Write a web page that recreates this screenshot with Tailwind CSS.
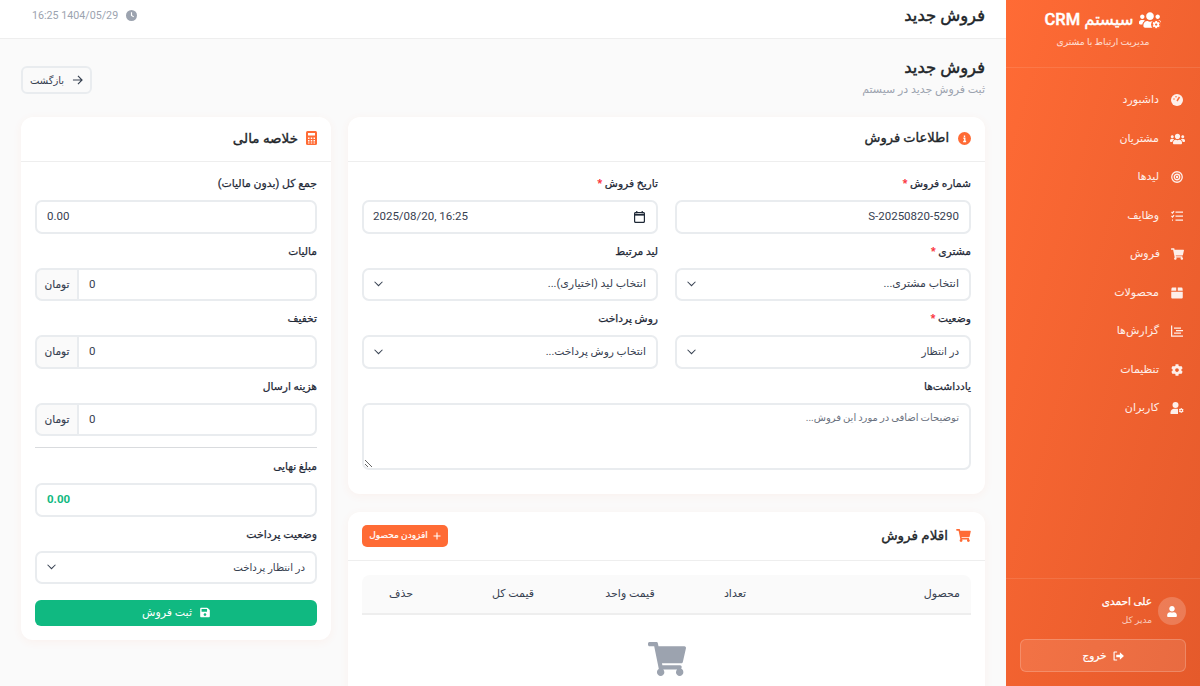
<!DOCTYPE html>
<html lang="fa" dir="rtl">
<head>
  <meta charset="UTF-8" />
  <title>فروش جدید</title>
  <script src="https://cdn.jsdelivr.net/npm/@tailwindcss/browser@4"></script>
</head>
<body class="h-[686px] overflow-hidden bg-[#fafafa] font-['Roboto','DejaVu_Sans',sans-serif] text-[#1f2937]">
<div class="flex h-[686px]">

  <!-- Sidebar -->
  <aside class="w-[194px] shrink-0 h-full flex flex-col text-white bg-gradient-to-br from-[#ff6b35] to-[#e55a2b]">
    <div class="h-[68px] border-b border-white/10 flex flex-col items-center pt-[9px]">
      <div class="flex items-center gap-[6px] h-[22px]">
        <svg class="w-[22px] h-[18px]" viewBox="0 0 640 512" fill="currentColor"><path d="M96 224c35.3 0 64-28.7 64-64s-28.7-64-64-64-64 28.7-64 64 28.7 64 64 64zm448 0c35.3 0 64-28.7 64-64s-28.7-64-64-64-64 28.7-64 64 28.7 64 64 64zm32 32h-64c-17.6 0-33.5 7.1-45.1 18.6 40.3 22.1 68.9 62 75.1 109.4h66c17.7 0 32-14.3 32-32v-32c0-35.3-28.7-64-64-64zm-256 0c61.9 0 112-50.1 112-112S381.9 32 320 32 208 82.1 208 144s50.1 112 112 112zm76.8 32h-8.3c-20.8 10-43.9 16-68.5 16s-47.6-6-68.5-16h-8.3C179.6 288 128 339.6 128 403.2V432c0 26.5 21.5 48 48 48h288c26.5 0 48-21.5 48-48v-28.8c0-63.6-51.6-115.2-115.2-115.2zm-223.7-13.4C161.5 263.1 145.6 256 128 256H64c-35.3 0-64 28.7-64 64v32c0 17.7 14.3 32 32 32h65.9c6.3-47.4 34.9-87.3 75.2-109.4z"/><circle cx="500" cy="390" r="150" fill="#ff6b35"/><svg x="390" y="280" width="220" height="220" viewBox="0 0 512 512"><path d="M487.4 315.7l-42.6-24.6c4.3-23.2 4.3-47 0-70.2l42.6-24.6c4.9-2.8 7.1-8.6 5.5-14-11.1-35.6-30-67.8-54.7-94.6-3.8-4.1-10-5.1-14.8-2.3L380.8 110c-17.9-15.4-38.5-27.3-60.8-35.1V25.8c0-5.6-3.9-10.5-9.4-11.7-36.7-8.2-74.3-7.8-109.2 0-5.5 1.2-9.4 6.1-9.4 11.7V75c-22.2 7.9-42.8 19.8-60.8 35.1L88.7 85.5c-4.9-2.8-11-1.9-14.8 2.3-24.7 26.7-43.6 58.9-54.7 94.6-1.7 5.4.6 11.2 5.5 14L67.3 221c-4.3 23.2-4.3 47 0 70.2l-42.6 24.6c-4.9 2.8-7.1 8.6-5.5 14 11.1 35.6 30 67.8 54.7 94.6 3.8 4.1 10 5.1 14.8 2.3l42.6-24.6c17.9 15.4 38.5 27.3 60.8 35.1v49.2c0 5.6 3.9 10.5 9.4 11.7 36.7 8.2 74.3 7.8 109.2 0 5.5-1.2 9.4-6.1 9.4-11.7v-49.2c22.2-7.9 42.8-19.8 60.8-35.1l42.6 24.6c4.9 2.8 11 1.9 14.8-2.3 24.7-26.7 43.6-58.9 54.7-94.6 1.5-5.5-.7-11.3-5.6-14.1zM256 336c-44.1 0-80-35.9-80-80s35.9-80 80-80 80 35.9 80 80-35.9 80-80 80z"/></svg></svg>
        <span class="text-[16.4px] [-webkit-text-stroke:0.4px_currentColor]">سیستم <b class="text-[16.5px] font-medium">CRM</b></span>
      </div>
      <p class="mt-[4px] text-[9.2px] text-white/80">مدیریت ارتباط با مشتری</p>
    </div>

    <nav class="pt-[13px] flex flex-col text-[11px] text-white/90">
      <a class="h-[38.5px] flex items-center gap-[12px] pr-[17px]">
        <svg class="w-[12px] h-[12px] shrink-0" viewBox="0 0 24 24"><circle cx="12" cy="12" r="12" fill="currentColor"/><path d="M12 14 17 6" stroke="#ff6b35" stroke-width="3"/><circle cx="6" cy="10" r="1.5" fill="#ff6b35"/><circle cx="10" cy="5.500" r="1.5" fill="#ff6b35"/></svg>
        <span>داشبورد</span>
      </a>
      <a class="h-[38.5px] flex items-center gap-[11px] pr-[15px]">
        <svg class="w-[15px] h-[12px] shrink-0" viewBox="0 0 640 512" fill="currentColor"><path d="M96 224c35.3 0 64-28.7 64-64s-28.7-64-64-64-64 28.7-64 64 28.7 64 64 64zm448 0c35.3 0 64-28.7 64-64s-28.7-64-64-64-64 28.7-64 64 28.7 64 64 64zm32 32h-64c-17.6 0-33.5 7.1-45.1 18.6 40.3 22.1 68.9 62 75.1 109.4h66c17.7 0 32-14.3 32-32v-32c0-35.3-28.7-64-64-64zm-256 0c61.9 0 112-50.1 112-112S381.9 32 320 32 208 82.1 208 144s50.1 112 112 112zm76.8 32h-8.3c-20.8 10-43.9 16-68.5 16s-47.6-6-68.5-16h-8.3C179.6 288 128 339.6 128 403.2V432c0 26.5 21.5 48 48 48h288c26.5 0 48-21.5 48-48v-28.8c0-63.6-51.6-115.2-115.2-115.2zm-223.7-13.4C161.5 263.1 145.6 256 128 256H64c-35.3 0-64 28.700-64 64v32c0 17.7 14.3 32 32 32h65.900c6.3-47.4 34.9-87.3 75.2-109.4z"/></svg>
        <span>مشتریان</span>
      </a>
      <a class="h-[38.5px] flex items-center gap-[12px] pr-[17px]">
        <svg class="w-[12px] h-[12px] shrink-0" viewBox="0 0 24 24" fill="none" stroke="currentColor" stroke-width="2.600"><circle cx="12" cy="12" r="10.500"/><circle cx="12" cy="12" r="5.500"/><circle cx="12" cy="12" r="1.200"/></svg>
        <span>لیدها</span>
      </a>
      <a class="h-[38.5px] flex items-center gap-[12px] pr-[17px]">
        <svg class="w-[12px] h-[12px] shrink-0" viewBox="0 0 24 24" fill="none" stroke="currentColor" stroke-width="2.500"><path d="M9 4h15M9 12h15M9 20h15M1 4l2 2 3-4M1 12l2 2 3-4M2 20h2"/></svg>
        <span>وظایف</span>
      </a>
      <a class="h-[38.5px] flex items-center gap-[11px] pr-[16px]">
        <svg class="w-[13px] h-[12px] shrink-0" viewBox="0 0 576 512" fill="currentColor"><path d="M528.12 301.319l47.273-208C578.806 78.301 567.391 64 551.99 64H159.208l-9.166-44.81C147.758 8.021 137.93 0 126.529 0H24C10.745 0 0 10.745 0 24v16c0 13.255 10.745 24 24 24h69.883l70.248 343.435C147.325 417.1 136 435.222 136 456c0 30.928 25.072 56 56 56s56-25.072 56-56c0-15.674-6.447-29.835-16.824-40h209.647C430.447 426.165 424 440.326 424 456c0 30.928 25.072 56 56 56s56-25.072 56-56c0-22.172-12.888-41.332-31.579-50.405l5.517-24.276c3.413-15.018-8.002-29.319-23.403-29.319H218.117l-6.545-32h293.145c11.206 0 20.92-7.754 23.403-18.681z"/></svg>
        <span>فروش</span>
      </a>
      <a class="h-[38.5px] flex items-center gap-[12px] pr-[17px]">
        <svg class="w-[12px] h-[12px] shrink-0" viewBox="0 0 24 24" fill="currentColor"><path d="M3 1h7.500v6.500H0.500L1 3a2 2 0 0 1 2-2zM13.500 1H21a2 2 0 0 1 2 2l.500 4.500h-10zM0.500 9.500h23V21a2 2 0 0 1-2 2h-19a2 2 0 0 1-2-2z"/></svg>
        <span>محصولات</span>
      </a>
      <a class="h-[38.5px] flex items-center gap-[12px] pr-[17px]">
        <svg class="w-[12px] h-[12px] shrink-0" viewBox="0 0 24 24" fill="currentColor"><path d="M0 1h2.500v20H24v2.500H0zM6 5h14v2.500H6zM10 10h14v2.500H10zM6 15h14v2.500H6z"/></svg>
        <span>گزارش‌ها</span>
      </a>
      <a class="h-[38.5px] flex items-center gap-[12px] pr-[17px]">
        <svg class="w-[12px] h-[12px] shrink-0" viewBox="0 0 512 512" fill="currentColor"><path d="M487.4 315.7l-42.6-24.6c4.3-23.2 4.3-47 0-70.2l42.6-24.6c4.9-2.8 7.1-8.6 5.5-14-11.1-35.6-30-67.8-54.7-94.6-3.8-4.1-10-5.1-14.8-2.3L380.8 110c-17.9-15.4-38.5-27.3-60.8-35.1V25.8c0-5.6-3.9-10.5-9.4-11.7-36.7-8.2-74.3-7.8-109.2 0-5.5 1.2-9.4 6.1-9.4 11.7V75c-22.2 7.9-42.8 19.8-60.8 35.1L88.7 85.5c-4.9-2.8-11-1.9-14.8 2.3-24.7 26.7-43.6 58.9-54.7 94.6-1.7 5.4.6 11.2 5.5 14L67.3 221c-4.3 23.2-4.3 47 0 70.2l-42.6 24.6c-4.9 2.8-7.1 8.6-5.5 14 11.1 35.6 30 67.8 54.7 94.6 3.8 4.1 10 5.1 14.8 2.3l42.6-24.6c17.9 15.4 38.5 27.3 60.8 35.1v49.2c0 5.6 3.9 10.5 9.4 11.7 36.7 8.2 74.3 7.8 109.2 0 5.5-1.2 9.4-6.1 9.4-11.7v-49.2c22.2-7.9 42.8-19.8 60.8-35.1l42.6 24.6c4.9 2.8 11 1.9 14.8-2.3 24.7-26.7 43.6-58.9 54.7-94.6 1.5-5.5-.7-11.3-5.6-14.1zM256 336c-44.1 0-80-35.9-80-80s35.9-80 80-80 80 35.9 80 80-35.9 80-80 80z"/></svg>
        <span>تنظیمات</span>
      </a>
      <a class="h-[38.5px] flex items-center gap-[11px] pr-[16px]">
        <svg class="w-[14px] h-[12px] shrink-0" viewBox="0 0 28 24" fill="currentColor"><circle cx="11" cy="6" r="6"/><path d="M1 24v-3c0-5 4-7.500 7-7.500h6c1.500 0 2 .5 2 2v8.500z"/><svg x="17.500" y="12" width="10" height="10" viewBox="0 0 512 512"><path d="M487.4 315.7l-42.6-24.6c4.3-23.2 4.3-47 0-70.2l42.6-24.6c4.9-2.8 7.1-8.6 5.5-14-11.1-35.6-30-67.8-54.7-94.6-3.8-4.1-10-5.1-14.8-2.3L380.8 110c-17.9-15.4-38.5-27.3-60.8-35.1V25.8c0-5.6-3.9-10.5-9.4-11.7-36.7-8.2-74.3-7.8-109.2 0-5.5 1.2-9.4 6.1-9.4 11.7V75c-22.2 7.9-42.8 19.8-60.8 35.1L88.7 85.5c-4.9-2.8-11-1.9-14.8 2.3-24.7 26.7-43.6 58.9-54.7 94.6-1.7 5.4.6 11.2 5.5 14L67.3 221c-4.3 23.2-4.3 47 0 70.2l-42.6 24.6c-4.9 2.8-7.1 8.6-5.5 14 11.1 35.6 30 67.8 54.7 94.6 3.8 4.1 10 5.1 14.8 2.3l42.6-24.6c17.9 15.4 38.5 27.3 60.8 35.1v49.2c0 5.6 3.9 10.5 9.4 11.7 36.7 8.2 74.3 7.8 109.2 0 5.5-1.2 9.4-6.1 9.4-11.7v-49.2c22.2-7.9 42.8-19.8 60.8-35.1l42.6 24.6c4.9 2.8 11 1.9 14.8-2.3 24.7-26.7 43.6-58.9 54.7-94.6 1.5-5.5-.7-11.3-5.6-14.1zM256 336c-44.1 0-80-35.9-80-80s35.9-80 80-80 80 35.9 80 80-35.9 80-80 80z"/></svg></svg>
        <span>کاربران</span>
      </a>
    </nav>

    <div class="mt-auto border-t border-white/10 px-[14px] pt-[18px] pb-[14px]">
      <div class="flex items-center gap-[6px] h-[28px]">
        <div class="w-[28px] h-[28px] rounded-full bg-white/20 flex items-center justify-center">
          <svg class="w-[10px] h-[11px]" viewBox="0 0 448 512" fill="currentColor"><path d="M224 256c70.7 0 128-57.3 128-128S294.7 0 224 0 96 57.3 96 128s57.3 128 128 128zm89.6 32h-16.7c-22.2 10.2-46.9 16-72.9 16s-50.6-5.8-72.9-16h-16.7C60.200 288 0 348.2 0 422.4V464c0 26.5 21.5 48 48 48h352c26.5 0 48-21.500 48-48v-41.6c0-74.2-60.2-134.4-134.4-134.4z"/></svg>
        </div>
        <div class="flex flex-col">
          <span class="text-[10.500px] [-webkit-text-stroke:0.25px_currentColor] leading-[18px]">علی احمدی</span>
          <span class="text-[9px] text-white/70 leading-[18px]">مدیر کل</span>
        </div>
      </div>
      <button class="mt-[14px] w-full h-[33px] rounded-[6px] bg-white/10 border border-white/20 flex items-center justify-center gap-[6px] text-[10.500px] [-webkit-text-stroke:0.25px_currentColor] text-white">
        <svg class="w-[11px] h-[10px]" viewBox="0 0 24 22" fill="currentColor"><path d="M9 1H3a2 2 0 0 0-2 2v16a2 2 0 0 0 2 2h6v-2.500H3.500v-15H9z"/><path d="M7 8h8V3l9 8-9 8v-5H7z"/></svg>
        <span>خروج</span>
      </button>
    </div>
  </aside>

  <!-- Main -->
  <main class="flex-1 min-w-0 flex flex-col">
    <header class="h-[39px] shrink-0 bg-white border-b border-[#eeeeee] flex items-center justify-between pr-[21px] pl-[32px]">
      <h1 class="text-[16.4px] text-[#212529] [-webkit-text-stroke:0.45px_currentColor] leading-none pb-[6px]">فروش جدید</h1>
      <div class="flex items-center gap-[8px] text-[10.7px] text-[#9ca3af] pb-[6px]">
        <svg class="w-[11px] h-[11px]" viewBox="0 0 24 24"><circle cx="12" cy="12" r="12" fill="currentColor"/><path d="M12 5v7l5 3" stroke="#fff" stroke-width="2.500" fill="none"/></svg>
        <span dir="ltr">16:25 1404/05/29</span>
      </div>
    </header>

    <div class="flex-1 px-[21px] pt-[19px] min-h-0">
      <div class="flex items-start justify-between h-[59px]">
        <div>
          <h2 class="text-[16.4px] text-[#212529] [-webkit-text-stroke:0.45px_currentColor] leading-[20px]">فروش جدید</h2>
          <p class="text-[11px] text-[#9ca3af] leading-[18px] mt-[3px]">ثبت فروش جدید در سیستم</p>
        </div>
        <button class="mt-[8px] w-[71px] h-[28px] rounded-[6px] border-2 border-[#e9ecef] bg-[#fafafa] flex items-center justify-center gap-[8px] text-[10px] text-[#374151]">
          <svg class="w-[11px] h-[10px]" viewBox="0 0 24 22" fill="none" stroke="currentColor" stroke-width="2.500"><path d="M2 11h20M13 2l9 9-9 9"/></svg>
          <span>بازگشت</span>
        </button>
      </div>

      <div class="flex gap-[17px] items-start">
        <!-- Right column -->
        <div class="w-[637px] shrink-0 flex flex-col gap-[18px]">
          <section class="bg-white rounded-[12px] shadow-[0_2px_10px_rgba(255,107,53,0.06)]">
            <div class="h-[45px] border-b border-[#eeeeee] flex items-center gap-[9px] px-[14px]">
              <svg class="w-[13px] h-[13px] mb-[2px]" viewBox="0 0 24 24"><circle cx="12" cy="12" r="12" fill="#ff6b35"/><path d="M12 6.500v2.500M10 11.500h2.500v6M9.500 17.500h5.500" stroke="#fff" stroke-width="2.500" fill="none"/></svg>
              <h3 class="text-[13px] [-webkit-text-stroke:0.35px_currentColor] text-[#212529] pb-[2px]">اطلاعات فروش</h3>
            </div>
            <div class="px-[14px] pt-[14px] pb-[24px]">
              <div class="grid grid-cols-2 gap-x-[17px]">
                <div class="mb-[10px]">
                  <label class="block h-[16px] mb-[8px] text-[10.7px] [-webkit-text-stroke:0.25px_currentColor] leading-[16px]">شماره فروش <span class="text-red-500">*</span></label>
                  <div class="h-[33.6px] rounded-[7px] border-2 border-[#e9ecef] flex items-center px-[10px] text-[11.500px] text-[#374151]">S-20250820-5290</div>
                </div>
                <div class="mb-[10px]">
                  <label class="block h-[16px] mb-[8px] text-[10.7px] [-webkit-text-stroke:0.25px_currentColor] leading-[16px]">تاریخ فروش <span class="text-red-500">*</span></label>
                  <div class="h-[33.6px] rounded-[7px] border-2 border-[#e9ecef] flex items-center justify-between pl-[9px] pr-[11px] text-[11.500px] text-[#374151]">
                    <svg class="w-[11px] h-[12px]" viewBox="0 0 20 22" fill="none" stroke="#1f2937" stroke-width="2.200"><rect x="1" y="3" width="18" height="18" rx="2"/><path d="M1 7h18" stroke-width="3"/><path d="M5 0v4M15 0v4"/></svg>
                    <span dir="ltr">2025/08/20, 16:25</span>
                  </div>
                </div>
                <div class="mb-[10px]">
                  <label class="block h-[16px] mb-[8px] text-[10.7px] [-webkit-text-stroke:0.25px_currentColor] leading-[16px]">مشتری <span class="text-red-500">*</span></label>
                  <div class="h-[33.6px] rounded-[7px] border-2 border-[#e9ecef] flex items-center justify-between px-[10px] text-[11px] text-[#374151]">
                    <span>انتخاب مشتری...</span>
                    <svg class="w-[9px] h-[6px]" viewBox="0 0 16 10" fill="none" stroke="#374151" stroke-width="1.800"><path d="M1 1l7 7 7-7"/></svg>
                  </div>
                </div>
                <div class="mb-[10px]">
                  <label class="block h-[16px] mb-[8px] text-[10.7px] [-webkit-text-stroke:0.25px_currentColor] leading-[16px]">لید مرتبط</label>
                  <div class="h-[33.6px] rounded-[7px] border-2 border-[#e9ecef] flex items-center justify-between px-[10px] text-[11px] text-[#374151]">
                    <span>انتخاب لید (اختیاری)...</span>
                    <svg class="w-[9px] h-[6px]" viewBox="0 0 16 10" fill="none" stroke="#374151" stroke-width="1.800"><path d="M1 1l7 7 7-7"/></svg>
                  </div>
                </div>
                <div class="mb-[10px]">
                  <label class="block h-[16px] mb-[8px] text-[10.7px] [-webkit-text-stroke:0.25px_currentColor] leading-[16px]">وضعیت <span class="text-red-500">*</span></label>
                  <div class="h-[33.6px] rounded-[7px] border-2 border-[#e9ecef] flex items-center justify-between px-[10px] text-[10.300px] text-[#374151]">
                    <span>در انتظار</span>
                    <svg class="w-[9px] h-[6px]" viewBox="0 0 16 10" fill="none" stroke="#374151" stroke-width="1.800"><path d="M1 1l7 7 7-7"/></svg>
                  </div>
                </div>
                <div class="mb-[10px]">
                  <label class="block h-[16px] mb-[8px] text-[10.7px] [-webkit-text-stroke:0.25px_currentColor] leading-[16px]">روش پرداخت</label>
                  <div class="h-[33.6px] rounded-[7px] border-2 border-[#e9ecef] flex items-center justify-between px-[10px] text-[10.700px] text-[#374151]">
                    <span>انتخاب روش پرداخت...</span>
                    <svg class="w-[9px] h-[6px]" viewBox="0 0 16 10" fill="none" stroke="#374151" stroke-width="1.800"><path d="M1 1l7 7 7-7"/></svg>
                  </div>
                </div>
              </div>
              <label class="block h-[16px] mb-[8px] text-[10.7px] [-webkit-text-stroke:0.25px_currentColor] leading-[16px]">یادداشت‌ها</label>
              <textarea class="block w-full h-[67px] rounded-[7px] border-2 border-[#e9ecef] px-[10px] py-[5px] text-[10px] [word-spacing:-0.5px] placeholder:text-[#6b7280]" placeholder="توضیحات اضافی در مورد این فروش..."></textarea>
            </div>
          </section>

          <section class="bg-white rounded-t-[12px] shadow-[0_2px_10px_rgba(255,107,53,0.06)] h-[200px]">
            <div class="h-[49px] border-b border-[#eeeeee] flex items-center justify-between px-[14px]">
              <div class="flex items-center gap-[8px]">
                <svg class="w-[15px] h-[13px]" viewBox="0 0 576 512" fill="#ff6b35"><path d="M528.12 301.319l47.273-208C578.806 78.301 567.391 64 551.99 64H159.208l-9.166-44.81C147.758 8.021 137.93 0 126.529 0H24C10.745 0 0 10.745 0 24v16c0 13.255 10.745 24 24 24h69.883l70.248 343.435C147.325 417.1 136 435.222 136 456c0 30.928 25.072 56 56 56s56-25.072 56-56c0-15.674-6.447-29.835-16.824-40h209.647C430.447 426.165 424 440.326 424 456c0 30.928 25.072 56 56 56s56-25.072 56-56c0-22.172-12.888-41.332-31.579-50.405l5.517-24.276c3.413-15.018-8.002-29.319-23.403-29.319H218.117l-6.545-32h293.145c11.206 0 20.92-7.754 23.403-18.681z"/></svg>
                <h3 class="text-[13.500px] [-webkit-text-stroke:0.35px_currentColor] text-[#212529] pb-[2px]">اقلام فروش</h3>
              </div>
              <button class="w-[86px] h-[22px] rounded-[5px] bg-[#ff6b35] text-white text-[9px] [-webkit-text-stroke:0.2px_currentColor] flex items-center justify-center gap-[5px]">
                <svg class="w-[8px] h-[8px]" viewBox="0 0 16 16" stroke="currentColor" stroke-width="2.200"><path d="M8 1v14M1 8h14"/></svg>
                <span>افزودن محصول</span>
              </button>
            </div>
            <div class="px-[14px] pt-[14px]">
              <div class="h-[40px] bg-[#fafafa] rounded-t-[8px] border-b-2 border-[#eeeeee] grid grid-cols-[186px_100px_110px_124px_1fr] items-center text-[11px] text-[#374151]">
                <span class="pr-[11px]">محصول</span>
                <span class="text-center">تعداد</span>
                <span class="text-center">قیمت واحد</span>
                <span class="text-center">قیمت کل</span>
                <span class="text-center pr-[11px]">حذف</span>
              </div>
              <div class="flex justify-center pt-[27px]">
                <svg class="w-[38px] h-[34px]" viewBox="0 0 576 512" fill="#9ca3af"><path d="M528.12 301.319l47.273-208C578.806 78.301 567.391 64 551.99 64H159.208l-9.166-44.81C147.758 8.021 137.93 0 126.529 0H24C10.745 0 0 10.745 0 24v16c0 13.255 10.745 24 24 24h69.883l70.248 343.435C147.325 417.1 136 435.222 136 456c0 30.928 25.072 56 56 56s56-25.072 56-56c0-15.674-6.447-29.835-16.824-40h209.647C430.447 426.165 424 440.326 424 456c0 30.928 25.072 56 56 56s56-25.072 56-56c0-22.172-12.888-41.332-31.579-50.405l5.517-24.276c3.413-15.018-8.002-29.319-23.403-29.319H218.117l-6.545-32h293.145c11.206 0 20.92-7.754 23.403-18.681z"/></svg>
              </div>
            </div>
          </section>
        </div>

        <!-- Left column -->
        <section class="flex-1 min-w-0 bg-white rounded-[12px] shadow-[0_2px_10px_rgba(255,107,53,0.06)]">
          <div class="h-[45px] border-b border-[#eeeeee] flex items-center gap-[8px] px-[14px]">
            <svg class="w-[11px] h-[14px] mb-[2px]" viewBox="0 0 22 28"><rect width="22" height="28" rx="3" fill="#ff6b35"/><rect x="4" y="4" width="14" height="5" fill="#fff"/><path d="M4 13h3v3H4zM9.500 13h3v3h-3zM15 13h3v3h-3zM4 18h3v3H4zM9.500 18h3v3h-3zM15 18h3v3h-3zM4 23h3v2H4zM9.500 23h3v2h-3zM15 23h3v2h-3z" fill="#fff"/></svg>
            <h3 class="text-[13.500px] [-webkit-text-stroke:0.35px_currentColor] text-[#212529] pb-[2px]">خلاصه مالی</h3>
          </div>
          <div class="px-[14px] pt-[14px] pb-[13.500px]">
            <div class="mb-[10px]">
              <label class="block h-[16px] mb-[8px] text-[10.9px] [-webkit-text-stroke:0.25px_currentColor] leading-[16px]">جمع کل (بدون مالیات)</label>
              <div class="h-[33.6px] rounded-[7px] border-2 border-[#e9ecef] flex items-center justify-end px-[10px] text-[11.500px] text-[#374151]">0.00</div>
            </div>
            <div class="mb-[10px]">
              <label class="block h-[16px] mb-[8px] text-[10.7px] [-webkit-text-stroke:0.25px_currentColor] leading-[16px]">مالیات</label>
              <div class="h-[33.6px] flex flex-row-reverse text-[11.500px] text-[#374151]">
                <div class="w-[42px] shrink-0 rounded-l-[7px] border-2 border-r-0 border-[#e9ecef] bg-[#fafafa] flex items-center justify-center text-[10.500px] [-webkit-text-stroke:0.15px_currentColor]">تومان</div>
                <div class="flex-1 rounded-r-[7px] border-2 border-[#e9ecef] flex items-center justify-end px-[10px]">0</div>
              </div>
            </div>
            <div class="mb-[10px]">
              <label class="block h-[16px] mb-[8px] text-[10.7px] [-webkit-text-stroke:0.25px_currentColor] leading-[16px]">تخفیف</label>
              <div class="h-[33.6px] flex flex-row-reverse text-[11.500px] text-[#374151]">
                <div class="w-[42px] shrink-0 rounded-l-[7px] border-2 border-r-0 border-[#e9ecef] bg-[#fafafa] flex items-center justify-center text-[10.500px] [-webkit-text-stroke:0.15px_currentColor]">تومان</div>
                <div class="flex-1 rounded-r-[7px] border-2 border-[#e9ecef] flex items-center justify-end px-[10px]">0</div>
              </div>
            </div>
            <div>
              <label class="block h-[16px] mb-[8px] text-[10.7px] [-webkit-text-stroke:0.25px_currentColor] leading-[16px]">هزینه ارسال</label>
              <div class="h-[33.6px] flex flex-row-reverse text-[11.500px] text-[#374151]">
                <div class="w-[42px] shrink-0 rounded-l-[7px] border-2 border-r-0 border-[#e9ecef] bg-[#fafafa] flex items-center justify-center text-[10.500px] [-webkit-text-stroke:0.15px_currentColor]">تومان</div>
                <div class="flex-1 rounded-r-[7px] border-2 border-[#e9ecef] flex items-center justify-end px-[10px]">0</div>
              </div>
            </div>
            <hr class="my-[10.8px] border-[#d9dbde]" />
            <div class="mb-[10px]">
              <label class="block h-[16px] mb-[8px] text-[10.7px] [-webkit-text-stroke:0.25px_currentColor] leading-[16px]">مبلغ نهایی</label>
              <div class="h-[33.6px] rounded-[7px] border-2 border-[#e9ecef] flex items-center justify-end px-[10px] text-[11.500px] font-bold text-[#10b981]">0.00</div>
            </div>
            <div class="mb-[15.500px]">
              <label class="block h-[16px] mb-[8px] text-[10.9px] [-webkit-text-stroke:0.25px_currentColor] leading-[16px]">وضعیت پرداخت</label>
              <div class="h-[33.6px] rounded-[7px] border-2 border-[#e9ecef] flex items-center justify-between px-[10px] text-[10.200px] text-[#374151]">
                <span>در انتظار پرداخت</span>
                <svg class="w-[9px] h-[6px]" viewBox="0 0 16 10" fill="none" stroke="#374151" stroke-width="1.800"><path d="M1 1l7 7 7-7"/></svg>
              </div>
            </div>
            <button class="w-full h-[26.500px] rounded-[6px] bg-[#10b981] text-white text-[11px] flex items-center justify-center gap-[8px]">
              <svg class="w-[10px] h-[11px]" viewBox="0 0 448 512" fill="currentColor"><path d="M433.941 129.941l-83.882-83.882A48 48 0 0 0 316.118 32H48C21.49 32 0 53.49 0 80v352c0 26.51 21.49 48 48 48h352c26.51 0 48-21.49 48-48V163.882a48 48 0 0 0-14.059-33.941zM224 416c-35.346 0-64-28.654-64-64 0-35.346 28.654-64 64-64s64 28.654 64 64c0 35.346-28.654 64-64 64zm96-304.52V212c0 6.627-5.373 12-12 12H76c-6.627 0-12-5.373-12-12V108c0-6.627 5.373-12 12-12h228.52c3.183 0 6.235 1.264 8.485 3.515l3.48 3.48A11.996 11.996 0 0 1 320 111.48z"/></svg>
              <span>ثبت فروش</span>
            </button>
          </div>
        </section>
      </div>
    </div>
  </main>
</div>
</body>
</html>
